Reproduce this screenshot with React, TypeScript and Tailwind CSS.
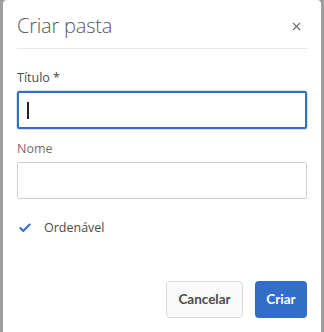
import { X, Check } from 'lucide-react';

export default function App() {
  return (
    <div className="w-[324px] h-[332px] bg-[#9e9e9e] px-[3px] overflow-hidden" style={{ fontFamily: '"Open Sans", "Liberation Sans", sans-serif' }}>
      <div className="h-full bg-white rounded-t-[4px] px-[14px] flex flex-col">
        {/* Header */}
        <div className="flex items-center justify-between h-[49px] pt-[4px] border-b border-[#e8e8e8]">
          <h2 className="text-[20px] font-light text-[#595959] tracking-[-0.2px]">Criar pasta</h2>
          <button className="text-[#6e6e6e] mr-[4px]">
            <X size={13} strokeWidth={2} />
          </button>
        </div>

        {/* Fields */}
        <label className="mt-[20px] text-[12.5px] leading-[18px] text-[#4b4b4b]">Título *</label>
        <div className="mt-[4px] h-[38px] border-2 border-[#326ec8] rounded-[2px] shadow-[0_0_0_1px_#d6e4f7] flex items-center pl-[8px]">
          <span className="w-[1.5px] h-[17px] bg-[#222]" />
        </div>

        <label className="mt-[11px] text-[12.5px] leading-[18px] text-[#6e6e6e]">Nome</label>
        <div className="mt-[4px] h-[37px] border border-[#cfcfcf] rounded-[2px]" />

        <div className="mt-[20px] flex items-center gap-[12px] pl-[1px]">
          <Check size={14} strokeWidth={3.5} className="text-[#326ec8]" />
          <span className="text-[12.5px] leading-[18px] text-[#4b4b4b]">Ordenável</span>
        </div>

        {/* Footer */}
        <div className="mt-auto mb-[14px] flex justify-end gap-[12px]">
          <button className="h-[37px] w-[77px] rounded-[4px] border border-[#dadada] bg-[#fafafa] text-[13.5px] font-bold text-[#4b4b4b]" style={{ fontFamily: 'Lato, "Open Sans", sans-serif' }}>
            Cancelar
          </button>
          <button className="h-[37px] w-[52px] rounded-[4px] bg-[#326ec8] text-[13.5px] font-bold text-white" style={{ fontFamily: 'Lato, "Open Sans", sans-serif' }}>
            Criar
          </button>
        </div>
      </div>
    </div>
  );
}
